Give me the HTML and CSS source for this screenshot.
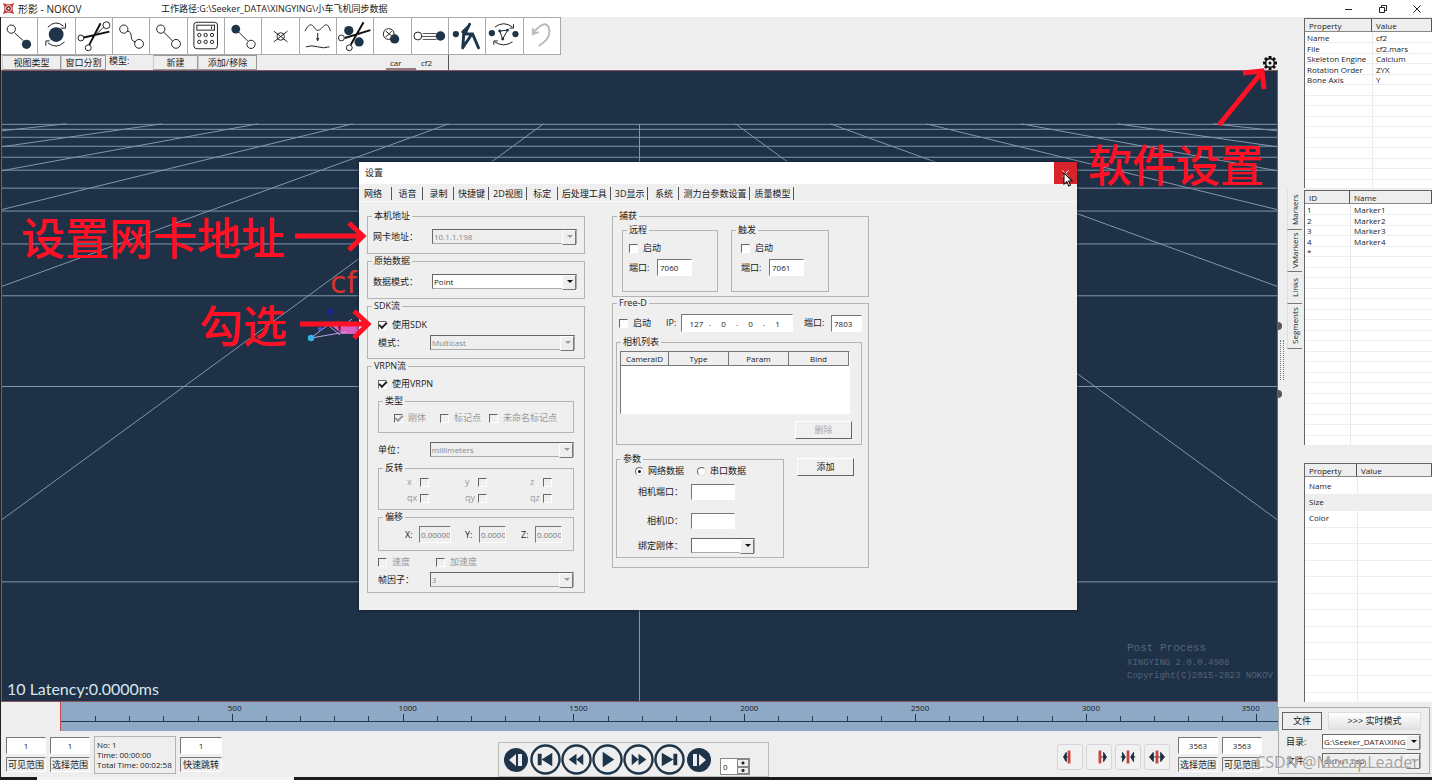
FILE: index.html
```html
<!DOCTYPE html>
<html lang="zh">
<head>
<meta charset="utf-8">
<title>形影 - NOKOV</title>
<link rel="stylesheet" href="styles.css">
</head>
<body>
<div class="app">
  <header class="titlebar">
    <svg class="logo" viewBox="0 0 14 14"><path d="M1 1l4 1.500h4l4-1.500-1.500 4v4l1.500 4-4-1.500H5L1 13l1.500-4V5z" fill="#c23a34"/><circle cx="7" cy="7" r="3.200" fill="#7a1c1c" stroke="#fff"/><circle cx="7" cy="7" r="1.200" fill="#fff"/></svg>
    <span class="app-name">形影 - NOKOV</span>
    <span class="app-path">工作路径:G:\Seeker_DATA\XINGYING\小车飞机同步数据</span>
    <div class="win-buttons">
      <button aria-label="最小化"><svg viewBox="0 0 10 10"><path d="M1 5.500h7"/></svg></button>
      <button aria-label="还原"><svg viewBox="0 0 10 10"><path d="M1.500 3.500h5v5h-5zM3.500 3.500v-2h5v5h-2"/></svg></button>
      <button aria-label="关闭"><svg viewBox="0 0 10 10"><path d="M1.500 1.500l7 7M8.500 1.500l-7 7"/></svg></button>
    </div>
  </header>

  <div class="body">
    <main class="main">
      <div class="toolbar">
        <button aria-label="连接"><svg viewBox="0 0 37 36"><path d="M14 15l9 8"/><circle cx="10.500" cy="11" r="4.200"/><circle class="f" cx="26" cy="26.500" r="4.700"/></svg></button>
        <button aria-label="旋转"><svg viewBox="0 0 37 36"><circle class="f" cx="18.500" cy="16.500" r="7.500"/><path d="M10 9q8-8 16-1M28 5v5h-5M27 24q-8 8-17 1M8 28v-5h4"/></svg></button>
        <button aria-label="剪切"><svg viewBox="0 0 37 36"><circle cx="31" cy="7" r="3.500"/><circle cx="5" cy="20" r="3"/><circle cx="12.500" cy="30" r="3"/><path class="b" d="M13.500 27L25 5M8 19.500l26-6"/><path d="M20 17l8-8"/></svg></button>
        <button aria-label="平滑"><svg viewBox="0 0 37 36"><path d="M14 13c8 0 1 10 9 11"/><circle cx="11" cy="11" r="4.200"/><circle cx="26.500" cy="26" r="4.500"/></svg></button>
        <button aria-label="直线"><svg viewBox="0 0 37 36"><path d="M14 14l9 9"/><circle cx="11" cy="11" r="4.200"/><circle cx="26.500" cy="26" r="4.500"/></svg></button>
        <button aria-label="计算"><svg viewBox="0 0 37 36"><rect x="6" y="4" width="24" height="27" rx="3"/><rect x="9" y="7" width="18" height="5"/><path d="M24 8v3"/><circle cx="11.500" cy="17" r="1.700"/><circle cx="18" cy="17" r="1.700"/><circle cx="24.500" cy="17" r="1.700"/><circle cx="11.500" cy="24" r="1.700"/><circle cx="18" cy="24" r="1.700"/><circle cx="24.500" cy="24" r="1.700"/></svg></button>
        <button aria-label="替换"><svg viewBox="0 0 37 36"><path d="M14 14l9 9"/><circle class="f" cx="11" cy="11" r="4.500"/><circle cx="26.500" cy="26.500" r="4.200"/></svg></button>
        <button aria-label="删除点"><svg viewBox="0 0 37 36"><circle cx="19" cy="18.500" r="3.800"/><path d="M12 13l14 11M26 13L12 24"/></svg></button>
        <button aria-label="滤波"><svg viewBox="0 0 37 36"><path d="M5 13C10 3 13 7 15 10s4 3 7 0 6-7 9 3M18 15v7M17 20l1 3 1-3M6 29q6-2 12 0t12 0"/></svg></button>
        <button aria-label="剪切轨迹"><svg viewBox="0 0 37 36"><circle class="f" cx="12" cy="12.500" r="4.700"/><circle class="f" cx="22.500" cy="24" r="4.700"/><circle cx="4.500" cy="20" r="3"/><circle cx="12.500" cy="30" r="3"/><path class="b" d="M14 27L27 4M8 20l26-8"/></svg></button>
        <button aria-label="合并"><svg viewBox="0 0 37 36"><circle cx="15" cy="16" r="5.500"/><path d="M12 13l6 5M18 13l-6 6"/><circle class="f" cx="21" cy="21" r="4.700"/></svg></button>
        <button aria-label="移动"><svg viewBox="0 0 37 36"><circle cx="6" cy="18" r="4"/><path d="M11 15.500h14M10 18.500h15M11 21.500h14" stroke-width=".8"/><circle class="f" cx="29" cy="18" r="4.800"/></svg></button>
        <button aria-label="骨骼"><svg viewBox="0 0 37 36"><circle class="f" cx="7" cy="16" r="3.200"/><path class="m" d="M21 6l-5 10h8l6 14M15 16l-1 14M22 18l-8 12M14 14l6-6"/></svg></button>
        <button aria-label="交换"><svg viewBox="0 0 37 36"><circle class="f" cx="6" cy="15" r="3.200"/><circle class="f" cx="30" cy="16" r="3.200"/><path d="M9 9q9-7 18 0M28 6v4h-4M27 24q-9 6-18 0M8 27v-4h4M14 13l8-1-5 9z"/><circle class="f" cx="14" cy="13" r="1.500"/><circle class="f" cx="22" cy="12" r="1.500"/><circle class="f" cx="17" cy="21" r="1.500"/></svg></button>
        <button aria-label="撤销" disabled><svg class="undo" viewBox="0 0 37 36"><path d="M9 15Q24-2 26 13q0 9-11 15M9 10v6l6-2"/></svg></button>
      </div>
      <div class="subbar">
        <button class="w58">视图类型</button><button class="w45">窗口分割</button><span class="model-label">模型:</span><button class="w45">新建</button><button class="w58">添加/移除</button>
        <div class="model-tabs"><button>car</button><button class="on">cf2</button></div>
        <button class="gear" aria-label="软件设置"><svg viewBox="0 0 16 16"><g stroke="#111" stroke-width="3"><path d="M8 1v14M1 8h14M3 3l10 10M13 3L3 13"/></g><circle cx="8" cy="8" r="5" fill="#111"/><circle cx="8" cy="8" r="3.600" fill="#eee"/><circle cx="8" cy="8" r="1.500" fill="#111"/></svg></button>
      </div>
      <section class="viewport">
        <svg class="floor" viewBox="0 0 1276 632" preserveAspectRatio="none">
          <path d="M0 53.500h1276M0 58.500h1276M0 66.500h1276M0 75.500h1276M0 86.500h1276M0 99.500h1276M0 117.500h1276M0 140.500h1276M0 173.500h1276M0 225.500h1276M0 316.500h1276M0 512.500h1276"/>
          <path d="M638 53v579M542 53L0 450M734 53l542 397M447 53L0 216M829 53l447 163M351 53L0 139M925 53l351 86M256 53L0 100M1020 53l256 47M160 53L0 76M1116 53l160 23M64 53L0 60M1212 53l64 7"/>
        </svg>
        <span class="body-name">cf2</span>
        <svg class="rigid" viewBox="0 0 60 40"><path d="M25 20l35-1v10H36z" fill="#d95fc0"/><path d="M5 33l17-13 14 2 10-8M5 33l35-6M22 20l12 10" stroke="#b9a4e8" fill="none"/><path d="M24 9v10M21 8l3-5 3 5z" stroke="#1c1ca8" fill="#1c1ca8"/><path d="M30 16h6l-2 12z" fill="#8d1730"/><circle cx="5" cy="33" r="3.200" fill="#35b4e8"/><circle cx="14" cy="24" r="2" fill="#4a5be0"/></svg>
        <div class="latency">10 Latency:0.0000ms</div>
        <div class="version"><strong>Post Process</strong><span>XINGYING 2.0.0.4908</span><span>Copyright(C)2015-2023 NOKOV</span></div>
      </section>
      <div class="timeline">
        <div class="track">
          <i></i><i></i><i></i><i></i><i></i><i class="major"><span>500</span></i><i></i><i></i><i></i><i></i><i class="major"><span>1000</span></i><i></i><i></i><i></i><i></i><i class="major"><span>1500</span></i><i></i><i></i><i></i><i></i><i class="major"><span>2000</span></i><i></i><i></i><i></i><i></i><i class="major"><span>2500</span></i><i></i><i></i><i></i><i></i><i class="major"><span>3000</span></i><i></i><i></i><i></i><i></i><i class="major last"><span>3500</span></i>
        </div>
      </div>
      <footer class="controls">
        <div class="range"><input aria-label="可见起始" value="1"><button>可见范围</button></div>
        <div class="range"><input aria-label="选择起始" value="1"><button>选择范围</button></div>
        <div class="info"><span>No: 1</span><span>Time: 00:00:00</span><span>Total Time: 00:02:58</span></div>
        <div class="range jump"><input aria-label="跳转帧" value="1"><button>快速跳转</button></div>
        <div class="player">
          <button class="small" aria-label="上一帧"><svg viewBox="0 0 24 24"><circle cx="12" cy="12" r="12" fill="#1e3448"/><path d="M12 6v12L5 12zM14 6h4v12h-4z" fill="#eee"/></svg></button>
          <button aria-label="开头"><svg viewBox="0 0 32 32"><circle cx="16" cy="16" r="14.500"/><path d="M8 10h4v12H8zM23 9v14l-11-7z"/></svg></button>
          <button aria-label="倒放"><svg viewBox="0 0 32 32"><circle cx="16" cy="16" r="14.500"/><path d="M16 10v12l-8-6zM23 10v12l-7-6z"/></svg></button>
          <button aria-label="播放"><svg viewBox="0 0 32 32"><circle cx="16" cy="16" r="14.500"/><path d="M11 8l12 8-12 8z"/></svg></button>
          <button aria-label="快进"><svg viewBox="0 0 32 32"><circle cx="16" cy="16" r="14.500"/><path d="M9 10v12l7-6zM16 10v12l8-6z"/></svg></button>
          <button aria-label="结尾"><svg viewBox="0 0 32 32"><circle cx="16" cy="16" r="14.500"/><path d="M8 9v14l12-7zM20 10h4v12h-4z"/></svg></button>
          <button class="small" aria-label="下一帧"><svg viewBox="0 0 24 24"><circle cx="12" cy="12" r="12" fill="#1e3448"/><path d="M12 6v12l7-6zM6 6h4v12H6z" fill="#eee"/></svg></button>
          <div class="spin"><input aria-label="速度" value="0"><span><button aria-label="增加"></button><button aria-label="减少"></button></span></div>
        </div>
        <div class="trims">
          <button aria-label="左裁剪"><svg viewBox="0 0 26 26"><path d="M6 13h5M6 13l3-5v10zM8 9v8" class="n"/><path class="r" d="M12 6v14"/></svg></button>
          <button aria-label="右裁剪"><svg viewBox="0 0 26 26"><path d="M15 13h6M21 13l-3-5v10z" class="n"/><path class="r" d="M14 6v14"/></svg></button>
          <button aria-label="向内"><svg viewBox="0 0 26 26"><path d="M5 13h5M10 13l-3-5v10zM21 13h-5M16 13l3-5v10z" class="n"/><path class="r" d="M13 6v14"/></svg></button>
          <button aria-label="向外"><svg viewBox="0 0 26 26"><path d="M5 13h16M5 13l4-5v10zM21 13l-4-5v10z" class="n"/><path class="r" d="M13 6v14"/></svg></button>
        </div>
        <div class="range"><input aria-label="选择结束" value="3563"><button>选择范围</button></div>
        <div class="range"><input aria-label="可见结束" value="3563"><button>可见范围</button></div>
      </footer>
    </main>

    <aside class="side">
      <div class="side-top">
        <div class="splitter"><b></b><i></i><b></b></div>
        <nav class="vtabs"><button>Markers</button><button>VMarkers</button><button>Links</button><button>Segments</button></nav>
        <div class="panels">
          <div class="panel p1"><table><thead><tr><th>Property</th><th>Value</th></tr></thead><tbody><tr><td>Name</td><td>cf2</td></tr><tr><td>File</td><td>cf2.mars</td></tr><tr><td>Skeleton Engine</td><td>Calcium</td></tr><tr><td>Rotation Order</td><td>ZYX</td></tr><tr><td>Bone Axis</td><td>Y</td></tr></tbody></table></div>
          <div class="panel p2"><table><thead><tr><th>ID</th><th>Name</th></tr></thead><tbody><tr><td>1</td><td>Marker1</td></tr><tr><td>2</td><td>Marker2</td></tr><tr><td>3</td><td>Marker3</td></tr><tr><td>4</td><td>Marker4</td></tr><tr><td>*</td><td></td></tr></tbody></table></div>
          <div class="panel p3"><table><thead><tr><th>Property</th><th>Value</th></tr></thead><tbody><tr><td>Name</td><td></td></tr><tr class="alt"><td>Size</td><td></td></tr><tr><td>Color</td><td></td></tr></tbody></table></div>
        </div>
      </div>
      <div class="files">
        <div class="file-buttons"><button class="file">文件</button><button class="live">&gt;&gt;&gt; 实时模式</button></div>
        <div class="file-row"><label for="dir">目录:</label><span class="select on"><select id="dir"><option>G:\Seeker_DATA\XINGYING</option></select></span></div>
        <div class="file-row"><label for="cap">文件:</label><span class="select"><select id="cap"><option>dichu1.cap</option></select></span></div>
      </div>
    </aside>
  </div>
  <div class="taskbar"><span></span></div>

  <section class="dialog" role="dialog" aria-labelledby="dlg-title">
    <header class="dlg-head"><span id="dlg-title">设置</span><button aria-label="关闭"><svg viewBox="0 0 10 10"><path d="M1.500 1.500l7 7M8.500 1.500l-7 7"/></svg></button></header>
    <nav class="dlg-tabs"><button class="on">网络</button><button>语音</button><button>录制</button><button>快捷键</button><button>2D视图</button><button>标定</button><button>后处理工具</button><button>3D显示</button><button>系统</button><button>测力台参数设置</button><button>质量模型</button></nav>
    <div class="dlg-body">
      <div class="col left">
        <fieldset class="nic"><legend>本机地址</legend><div class="row a"><label for="nic">网卡地址：</label><span class="select"><select id="nic" disabled><option>10.1.1.198</option></select></span></div></fieldset>
        <fieldset class="nic"><legend>原始数据</legend><div class="row a"><label for="mode">数据模式：</label><span class="select on"><select id="mode"><option>Point</option></select></span></div></fieldset>
        <fieldset class="sdk"><legend>SDK流</legend>
          <label class="check"><input type="checkbox" checked>使用SDK</label>
          <div class="row"><label for="cast">模式：</label><span class="select"><select id="cast" disabled><option>Multicast</option></select></span></div>
        </fieldset>
        <fieldset class="vrpn"><legend>VRPN流</legend>
          <label class="check"><input type="checkbox" checked>使用VRPN</label>
          <fieldset class="types"><legend>类型</legend><div class="grid"><label class="check"><input type="checkbox" checked disabled>刚体</label><label class="check"><input type="checkbox" disabled>标记点</label><label class="check"><input type="checkbox" disabled>未命名标记点</label></div></fieldset>
          <div class="row unit"><label for="unit">单位：</label><span class="select"><select id="unit" disabled><option>millimeters</option></select></span></div>
          <fieldset class="flip"><legend>反转</legend><div class="grid"><label class="axis"><span>x</span><input type="checkbox" disabled></label><label class="axis"><span>y</span><input type="checkbox" disabled></label><label class="axis"><span>z</span><input type="checkbox" disabled></label><label class="axis"><span>qx</span><input type="checkbox" disabled></label><label class="axis"><span>qy</span><input type="checkbox" disabled></label><label class="axis"><span>qz</span><input type="checkbox" disabled></label></div></fieldset>
          <fieldset class="shift"><legend>偏移</legend><div class="grid"><label><span>X:</span><input class="wide" value="0.00000" disabled></label><label><span>Y:</span><input value="0.00000" disabled></label><label><span>Z:</span><input value="0.00000" disabled></label></div></fieldset>
          <div class="speeds"><label class="check"><input type="checkbox" disabled>速度</label><label class="check"><input type="checkbox" disabled>加速度</label></div>
          <div class="row"><label for="factor">帧因子：</label><span class="select"><select id="factor" disabled><option>3</option></select></span></div>
        </fieldset>
      </div>
      <div class="col right">
        <fieldset class="capture"><legend>捕获</legend>
          <div class="pair">
            <fieldset><legend>远程</legend><label class="check"><input type="checkbox">启动</label><div class="port"><label for="p1">端口:</label><input id="p1" value="7060"></div></fieldset>
            <fieldset class="trigger"><legend>触发</legend><label class="check"><input type="checkbox">启动</label><div class="port"><label for="p2">端口:</label><input id="p2" value="7061"></div></fieldset>
          </div>
        </fieldset>
        <fieldset class="freed"><legend>Free-D</legend>
          <div class="ip-row">
            <label class="check"><input type="checkbox">启动</label>
            <span class="ip-label">IP:</span>
            <div class="ip"><input aria-label="IP 1" value="127"><span>.</span><input aria-label="IP 2" value="0"><span>.</span><input aria-label="IP 3" value="0"><span>.</span><input aria-label="IP 4" value="1"></div>
            <label for="p3">端口:</label><input class="ip-port" id="p3" value="7803">
          </div>
          <fieldset class="cams"><legend>相机列表</legend>
            <div class="cam-table"><table><thead><tr><th>CameraID</th><th>Type</th><th>Param</th><th>Bind</th></tr></thead></table></div>
            <button class="btn" disabled>删除</button>
          </fieldset>
          <div class="param-row">
            <fieldset class="params"><legend>参数</legend>
              <div class="radios"><label class="check"><input type="radio" name="src" checked>网络数据</label><label class="check"><input type="radio" name="src">串口数据</label></div>
              <div class="prow"><label for="cport">相机端口：</label><input id="cport"></div>
              <div class="prow"><label for="cid">相机ID：</label><input id="cid"></div>
              <div class="prow"><label for="bind">绑定刚体：</label><span class="select on"><select id="bind"><option></option></select></span></div>
            </fieldset>
            <button class="btn">添加</button>
          </div>
        </fieldset>
      </div>
    </div>
  </section>

  <svg class="cursor" viewBox="0 0 10 14"><path d="M.8.800v10.500l2.600-2.300 1.800 4 1.600-.800-1.800-3.800h3.400z" fill="#fff" stroke="#111"/></svg>
  <div class="note n1"><span>设置网卡地址</span><svg viewBox="0 0 74 34"><path d="M0 17h68M54 4l14 13-14 14"/></svg></div>
  <div class="note n2"><span>勾选</span><svg viewBox="0 0 74 34"><path d="M0 17h68M54 4l14 13-14 14"/></svg></div>
  <div class="note n3"><svg viewBox="0 0 54 60"><path d="M4 57L47 4M28 5l19-2 2 18"/></svg><span>软件设置</span></div>
  <div class="watermark">CSDN @MocapLeader</div>
</div>
</body>
</html>
```

FILE: styles.css
```css
* { box-sizing: border-box; }
body {
  margin: 0;
  background: #eee;
  color: #1a1a1a;
  font: 9px/12px "Open Sans", "Noto Sans CJK SC", sans-serif;
}
button, input, select { font: inherit; color: inherit; margin: 0; padding: 0; border-radius: 0; }
button { background: none; border: 0; white-space: nowrap; }
svg { display: block; }
fieldset { --inset: 0px; margin: 0; padding: 0 0 0 var(--inset); border: 1px solid #b4b4b4; min-width: 0; }
legend { margin-left: calc(4px - var(--inset)); padding: 0 2px; line-height: 12px; }
table { border-collapse: separate; border-spacing: 0; table-layout: fixed; width: 100%; font-size: 8px; }
th { font-weight: 400; text-align: left; }
.app { position: relative; min-height: 100vh; display: flex; flex-direction: column; overflow: hidden; }

/* title bar */
.titlebar { display: flex; align-items: center; height: 17px; padding: 0 10px 0 2px; background: #fff; }
.logo { width: 13px; height: 13px; }
.app-name { margin-left: 3px; width: 143px; font-size: 10px; }
.win-buttons { margin-left: auto; display: flex; gap: 24px; }
.win-buttons svg { width: 10px; height: 10px; fill: none; stroke: #222; }

/* overall frame */
.body { flex: 1; display: grid; grid-template-columns: minmax(0, 1fr) 154px; border-left: 1px solid #222; }
.main { display: flex; flex-direction: column; }
.toolbar { display: grid; grid-template-columns: repeat(15, 1fr); width: 560px; height: 38px; border-top: 1px solid #aaa; border-bottom: 1px solid #aaa; }
.toolbar button { background: #fff; border-right: 1px solid #aaa; }
.toolbar svg { width: 100%; height: 36px; fill: none; stroke: #222; stroke-width: 1; }
.toolbar .f { fill: #1e3448; stroke: none; }
.toolbar .b { stroke: #111; stroke-width: 2; }
.toolbar .m { stroke: #1e3448; stroke-width: 3; stroke-linecap: round; }
.toolbar .undo { stroke: #bbb; stroke-width: 2; }
.subbar { display: flex; height: 15px; padding-left: 1px; }
.subbar > button { border: 1px solid #999; border-left-color: #ccc; line-height: 12px; }
.subbar .w58 { width: 59px; }
.subbar .w45 { width: 45px; }
.model-label { width: 47px; padding-left: 3px; }
.model-tabs { display: flex; margin-left: 129px; font-size: 8px; }
.model-tabs button { width: 30px; padding: 2px 0 0 4px; border-bottom: 2px solid #8c7c80; line-height: 11px; text-align: left; }
.model-tabs .on { width: 33px; border-right: 1px solid #555; border-bottom: 0; padding: 0 0 0 5px; }
.subbar .gear { margin-left: auto; border: 0; width: 16px; height: 16px; }

/* 3D view */
.viewport { position: relative; flex: 1; min-height: 560px; background: #1e3147; border: 1px solid #8c5560; overflow: hidden; }
.floor { position: absolute; inset: 0; width: 100%; height: 100%; fill: none; stroke: #8497aa; stroke-width: 1; }
.body-name { position: absolute; left: 328px; top: 194px; color: #d5332c; font: 30px/36px "DejaVu Sans", sans-serif; }
.rigid { position: absolute; left: 304px; top: 234px; width: 60px; height: 40px; }
.latency { position: absolute; left: 5px; bottom: 2px; color: #d6e8ee; font: 16px/20px Lato, sans-serif; }
.version { position: absolute; right: 8px; bottom: 18px; width: 142px; display: flex; flex-direction: column; color: #52657a; font: 9px/13px "Liberation Mono", monospace; white-space: nowrap; }
.version strong { font-weight: 400; font-size: 11px; line-height: 17px; }

/* timeline */
.timeline { height: 29px; padding-left: 59px; }
.track { display: flex; height: 29px; background: linear-gradient(#26384c, #26384c) 0 19px / 100% 1px no-repeat #8ea9c6; border-left: 1px solid #c04c50; }
.track i { flex: 100 0 0; font-style: normal; font-size: 8px; line-height: 11px; background: linear-gradient(#26384c, #26384c) 0 14px / 1px 5px no-repeat; min-width: 0; }
.track i:first-child { background: none; }
.track .major { background-position: 0 12px; background-size: 1px 7px; }
.track span { margin-left: -4px; white-space: nowrap; }
.track .last { flex-grow: 63; }
.track .last span { margin-left: -15px; }

/* bottom controls */
.controls { display: flex; align-items: flex-start; height: 46px; padding: 5px 16px 0 5px; gap: 4px; }
.range { display: flex; flex-direction: column; gap: 3px; width: 40px; margin-top: 1px; }
.range input { width: 100%; height: 17px; font-size: 8px; text-align: center; }
.range button { height: 15px; line-height: 12px; border: 1px solid #fff; border-left-color: #777; border-top-color: #777; }
.jump { width: 42px; }
.info { display: flex; flex-direction: column; width: 82px; height: 38px; padding: 3px 2px; border: 1px solid #b4b4b4; font-size: 8px; line-height: 10px; white-space: nowrap; }
input, .select, .ip { background: #fff; border: 1px solid #fff; border-top-color: #777; border-left-color: #777; }
.player { display: flex; align-items: center; width: 271px; height: 35px; margin: 6px auto 0; padding-left: 3px; border: 1px solid #bbb; }
.player > button { width: 31px; height: 31px; }
.player > .small { width: 24px; height: 24px; margin: 0 2px; }
.player svg { width: 100%; height: 100%; }
.player > button:not(.small) circle { fill: none; stroke: #1e3448; stroke-width: 2.500px; }
.player > button:not(.small) path { fill: #1e3448; }
.spin { display: flex; width: 30px; height: 17px; margin: 14px 0 0 7px; border: 1px solid #888; background: #fff; }
.spin input { width: 16px; border: 0; font-size: 8px; padding-left: 2px; }
.spin span { width: 12px; display: flex; flex-direction: column; }
.spin button { flex: 1; background: radial-gradient(circle, #222 1px, #eee 2px); border: 1px solid #888; }
.trims { display: flex; gap: 3px; margin: 8px 4px 0 12px; }
.trims button { width: 26px; height: 26px; border: 1px solid #d6d6d6; border-radius: 3px; background: #f1f1f1; }
.trims svg { width: 24px; height: 24px; fill: #1e2c40; stroke: #1e2c40; stroke-width: 1; }
.trims .r { stroke: #c8413c; stroke-width: 3; }
.taskbar { height: 3px; background: #1c1a1e; padding-left: 37px; }
.taskbar span { display: block; width: 257px; height: 3px; background: #f4f4f4; }

/* right column */
.side { display: flex; flex-direction: column; }
.side-top { flex: 1; display: flex; }
.splitter { width: 9px; padding-top: 305px; }
.splitter b { display: block; height: 8px; width: 4px; background: #555; border-radius: 0 4px 4px 0; }
.splitter i { display: block; width: 4px; height: 40px; margin: 10px 0 10px 2px; border-left: 1px dotted #777; border-right: 1px dotted #777; }
.vtabs { width: 17px; padding-top: 173px; padding-right: 2px; }
.vtabs button { display: block; writing-mode: vertical-rl; rotate: 180deg; width: 15px; height: 40px; line-height: 14px; border: 0 solid #777; border-top-width: 1px; border-right: 1px solid #ddd; font-size: 8px; }
.vtabs button:nth-child(2) { height: 42px; }
.vtabs button:nth-child(3) { height: 32px; }
.vtabs button:nth-child(4) { height: 45px; }
.panels { flex: 1; display: flex; flex-direction: column; padding-top: 1px; }
.panel { --c: 67px; border-left: 1px solid #666; border-top: 1px solid #666; overflow: hidden;
  background: linear-gradient(90deg, transparent var(--c), #eaeaea var(--c), #eaeaea calc(var(--c) + 1px), transparent calc(var(--c) + 1px)),
    repeating-linear-gradient(#fff 0 9px, #eee 9px 10px, #fff 10px 20px, #eee 20px 21px); background-position: 0 0, 0 14px; }
.panel th { height: 13px; line-height: 11px; padding: 0 4px; background: #eee; border-right: 1px solid #555; border-bottom: 1px solid #888; }
.panel th:first-child { width: var(--c); }
.panel td { height: 10px; line-height: 10px; padding: 0 2px; white-space: nowrap; }
.panel td + td { padding-left: 4px; }
.panel tbody tr:nth-child(even) td { height: 11px; }
.p1 { height: 170px; }
.panel tbody::before { content: ""; display: block; height: 1px; }
.p2 { --c: 45px; height: 255px; margin-top: 2px; }
.p3 { --c: 52px; flex: 1; margin-top: 18px; background-image: linear-gradient(90deg, transparent var(--c), #eaeaea var(--c), #eaeaea calc(var(--c) + 1px), transparent calc(var(--c) + 1px)), repeating-linear-gradient(#fff 0 16px, #eee 16px 17px, #fff 17px 32px, #eee 32px 33px); }
.p3 td, .p3 tbody tr:nth-child(even) td { height: 16px; padding-left: 4px; }
.p3 .alt { background: #eee; }
.files { margin: 5px 2px 3px 0; height: 67px; border: 1px solid #aaa; padding: 4px 8px 0 3px; }
.file-buttons { display: flex; gap: 6px; padding-bottom: 4px; }
.file-buttons button { height: 18px; }
.file { width: 40px; border: 1px solid #666; }
.live { flex: 1; border: 1px solid #ddd; background: linear-gradient(#fff, #e2e2e2); }
.file-row { display: flex; align-items: center; padding-bottom: 4px; padding-left: 4px; }
.file-row label { width: 36px; }
.file-row .select { flex: 1; min-width: 0; }

/* drop-downs */
.select { position: relative; display: block; height: 15px; width: 145px; border: 1px solid #aaa; border-top-color: #666; border-left-color: #666; background: #eee; }
.select select { display: block; width: 100%; height: 13px; padding: 0 14px 0 1px; border: 0; background: none; appearance: none; font-size: 8px; line-height: 12px; opacity: 1; }
.select select:disabled { color: #888; }
.select::before { content: ""; position: absolute; right: 0; top: 0; width: 12px; height: 13px; background: #eee; border: 1px solid #fff; border-right-color: #777; border-bottom-color: #777; pointer-events: none; }
.select::after { content: ""; position: absolute; right: 3px; top: 5px; border: 3px solid transparent; border-top-color: #999; border-bottom: 0; pointer-events: none; }
.select.on { background: #fff; }
.select.on::after { border-top-color: #111; }

/* settings dialog */
.dialog { position: absolute; left: 359px; top: 162px; width: 718px; min-height: 448px; background: #efefef; box-shadow: 0 0 3px #0d1a28; }
.dlg-head { display: flex; height: 22px; background: #fff; padding-left: 6px; align-items: center; }
.dlg-head button { width: 23px; height: 22px; margin-left: auto; background: #d9232a; display: grid; place-items: center; }
.dlg-head svg { width: 9px; height: 9px; stroke: #fff; }
.dlg-tabs { display: flex; height: 18px; padding-top: 3px; background: linear-gradient(#efefef 17px, #f8f8f8 17px); }
.dlg-tabs button { min-width: 31px; height: 13px; line-height: 12px; padding: 0 3px 0 4px; border-right: 1px solid #555; }
.dlg-tabs .on { min-width: 33px; padding: 0 9px 0 5px; }
.dlg-body { display: flex; gap: 27px; padding: 8px 8px 17px; }
.col { display: flex; flex-direction: column; }
.left { width: 218px; gap: 1px; }
.right { width: 257px; }
.nic { --inset: 5px; height: 44px; padding-top: 7px; }
.row { display: flex; align-items: center; height: 15px; }
.row label { width: 52px; }
.row.a label { width: 59px; }
.sdk { --inset: 10px; height: 59px; padding-top: 7px; }
.sdk .row { margin-top: 4px; }
.check { display: flex; align-items: center; gap: 5px; height: 12px; white-space: nowrap; }
.check:has(:disabled), .axis { color: #999; }
input[type=checkbox] { appearance: none; flex: none; width: 9px; height: 9px; border: 1px solid #fff; border-left-color: #666; border-top-color: #666; background: #fff; display: grid; place-items: center; }
input[type=checkbox]:disabled { background: #efefef; }
input[type=checkbox]:checked::before { content: ""; width: 6px; height: 3px; border: solid #222; border-width: 0 0 2px 2px; rotate: -45deg; translate: 0 -1px; }
input[type=checkbox]:checked:disabled::before { border-color: #999; }
input[type=radio] { appearance: none; flex: none; width: 9px; height: 9px; border: 1px solid #ddd; border-left-color: #666; border-top-color: #666; border-radius: 50%; display: grid; place-items: center; }
input[type=radio]:checked::before { content: ""; width: 3px; height: 3px; border-radius: 50%; background: #111; }
.vrpn { --inset: 10px; height: 233px; padding-top: 6px; padding-right: 10px; }
.types { --inset: 15px; height: 38px; margin-top: 5px; padding-top: 5px; }
.types .grid { display: grid; grid-template-columns: 46px 49px auto; }
.unit { margin: 9px 0 5px; }
.flip { --inset: 28px; height: 48px; padding-top: 2px; }
.flip .grid { display: grid; grid-template-columns: 58px 65px auto; row-gap: 4px; }
.axis { display: flex; align-items: center; height: 12px; }
.axis span { width: 13px; }
.shift { --inset: 26px; height: 40px; margin-top: 1px; padding-top: 3px; }
.shift .grid { display: grid; grid-template-columns: 60px 56px auto; }
.shift label { display: flex; align-items: center; }
.shift span { width: 14px; }
.shift input { width: 27px; height: 17px; font-size: 8px; background: #efefef; color: #777; padding-left: 1px; }
.shift .wide { width: 32px; }
.speeds { display: grid; grid-template-columns: 58px auto; margin: 5px 0 4px; }

.capture { --inset: 9px; height: 87px; padding-top: 2px; }
.pair { display: flex; gap: 13px; }
.pair fieldset { --inset: 6px; width: 96px; height: 68px; padding-top: 6px; }
.pair .trigger { --inset: 9px; width: 98px; }
.port { display: flex; align-items: center; margin-top: 5px; }
.port label { width: 28px; }
.port input { width: 35px; height: 17px; font-size: 8px; padding-left: 2px; }
.freed { --inset: 3px; height: 271px; padding-top: 5px; padding-right: 6px; }
.ip-row { display: flex; align-items: center; height: 18px; padding-left: 3px; }
.ip-row > .check { width: 47px; }
.ip-label { width: 15px; }
.ip { display: flex; width: 112px; height: 18px; margin-right: 11px; padding: 0 2px; font-size: 8px; line-height: 15px; }
.ip input { flex: 1; min-width: 0; border: 0; background: none; text-align: center; }
.ip-row label[for] { width: 27px; }
.ip-port { width: 31px; height: 17px; font-size: 8px; padding-left: 2px; }
.cams { --inset: 3px; height: 109px; margin-top: 4px; padding-top: 3px; padding-right: 9px; }
.cam-table { height: 63px; margin-right: 2px; background: #fff; border: 1px solid #777; border-right-color: #fff; border-bottom-color: #fff; }
.cam-table th { height: 13px; line-height: 11px; text-align: center; background: #efefef; border-right: 1px solid #777; border-bottom: 1px solid #777; }
.cam-table th:first-child { width: 48px; }
.btn { display: block; width: 57px; height: 18px; background: #f0f0f0; border: 1px solid #fff; border-right-color: #666; border-bottom-color: #666; }
.btn:disabled { color: #aaa; }
.cams .btn { margin: 7px 0 0 auto; }
.param-row { display: flex; gap: 13px; margin-top: 8px; }
.param-row .btn { margin-top: 5px; }
.params { --inset: 18px; width: 168px; height: 105px; }
.radios { display: flex; gap: 13px; }
.radios .check { gap: 4px; }
.prow { display: flex; align-items: center; height: 17px; margin-top: 6px; }
.prow + .prow { margin-top: 12px; }
.prow + .prow + .prow { margin-top: 8px; }
.prow label { width: 48px; margin-right: 8px; text-align: right; white-space: nowrap; }
.prow input { width: 44px; height: 16px; }
.prow .select { width: 64px; }

/* overlays */
.cursor { position: absolute; left: 1063px; top: 172px; width: 11px; height: 15px; }
.note { position: absolute; display: flex; align-items: center; color: #ff1024; font: 500 44px/52px "Noto Sans CJK SC", sans-serif; white-space: nowrap; }
.note svg { fill: none; stroke: #ff1024; stroke-width: 5; }
.n1 { left: 21px; top: 210px; gap: 10px; }
.n2 { left: 199px; top: 298px; gap: 13px; }
.n1 svg, .n2 svg { width: 74px; height: 34px; }
.n3 { left: 1088px; top: 68px; flex-direction: column; align-items: flex-start; gap: 9px; }
.n3 svg { width: 54px; height: 60px; margin-left: 127px; }
.watermark { position: absolute; right: 13px; bottom: 6px; color: #8b8b8bcc; font: 16px/24px "Noto Sans", sans-serif; text-shadow: 0 0 1px #fff; }
```
